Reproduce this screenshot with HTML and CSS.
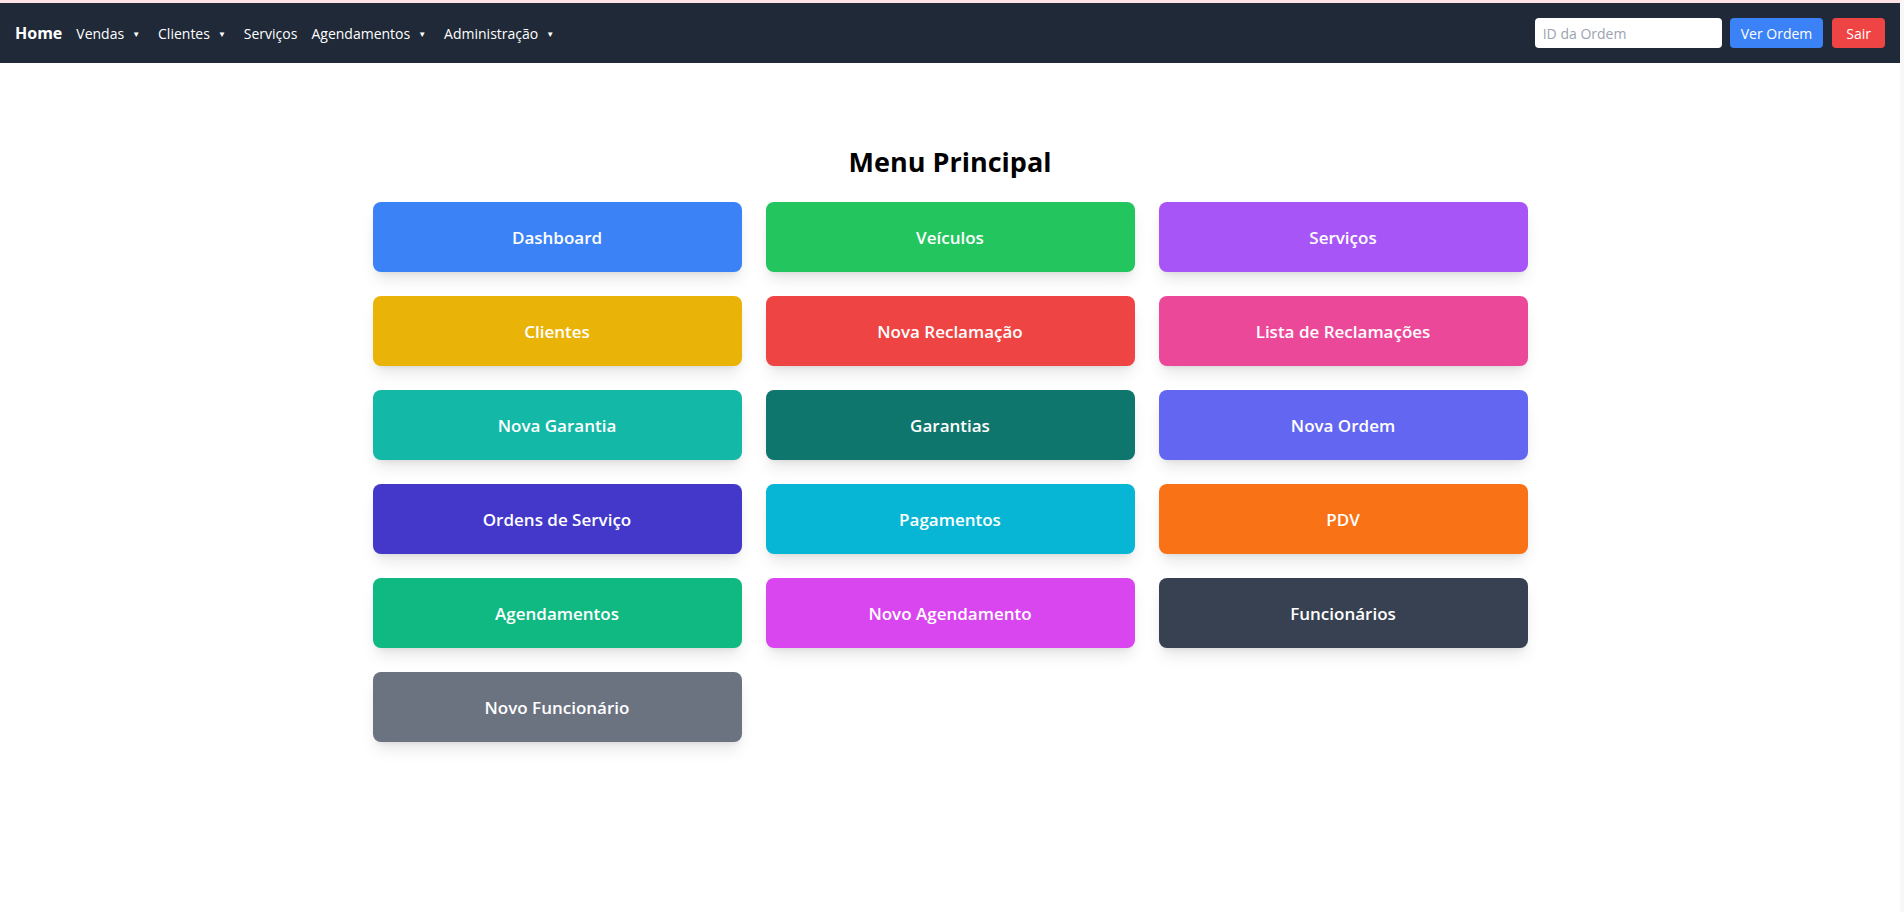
FILE: index.html
```html
<!DOCTYPE html>
<html lang="pt-BR">
<head>
<meta charset="utf-8">
<title>Menu Principal</title>
<link rel="stylesheet" href="styles.css">
</head>
<body>
<div class="page">
  <nav class="navbar">
    <div class="nav-left">
      <a class="brand" href="#">Home</a>
      <a class="nav-link" href="#">Vendas<span class="caret">&#9660;</span></a>
      <a class="nav-link" href="#">Clientes<span class="caret">&#9660;</span></a>
      <a class="nav-link" href="#">Serviços</a>
      <a class="nav-link" href="#">Agendamentos<span class="caret">&#9660;</span></a>
      <a class="nav-link" href="#">Administração<span class="caret">&#9660;</span></a>
    </div>
    <div class="nav-right">
      <input class="order-input" type="text" placeholder="ID da Ordem">
      <button class="btn btn-blue">Ver Ordem</button>
      <button class="btn btn-red btn-sair">Sair</button>
    </div>
  </nav>
  <main class="main">
    <h1 class="title">Menu Principal</h1>
    <div class="grid">
      <a class="tile c-blue" href="#">Dashboard</a>
      <a class="tile c-green" href="#">Veículos</a>
      <a class="tile c-purple" href="#">Serviços</a>
      <a class="tile c-yellow" href="#">Clientes</a>
      <a class="tile c-red" href="#">Nova Reclamação</a>
      <a class="tile c-pink" href="#">Lista de Reclamações</a>
      <a class="tile c-teal" href="#">Nova Garantia</a>
      <a class="tile c-teal-dark" href="#">Garantias</a>
      <a class="tile c-indigo" href="#">Nova Ordem</a>
      <a class="tile c-indigo-dark" href="#">Ordens de Serviço</a>
      <a class="tile c-cyan" href="#">Pagamentos</a>
      <a class="tile c-orange" href="#">PDV</a>
      <a class="tile c-emerald" href="#">Agendamentos</a>
      <a class="tile c-fuchsia" href="#">Novo Agendamento</a>
      <a class="tile c-gray-dark" href="#">Funcionários</a>
      <a class="tile c-gray" href="#">Novo Funcionário</a>
    </div>
  </main>
</div>
</body>
</html>
```

FILE: styles.css
```css
html {
  background: #f7f7f7;
}
body {
  margin: 0;
  font-family: "Open Sans", "Noto Sans", sans-serif;
  color: #000;
}
.page {
  margin-right: 4px;
  min-height: 912px;
  background: #fff;
  border-top: 3px solid #fbe3e6;
  box-sizing: border-box;
}
.navbar {
  height: 60px;
  background: #1f2937;
  display: flex;
  align-items: center;
  justify-content: space-between;
  padding: 0 15px 0 15px;
}
.nav-left {
  display: flex;
  align-items: center;
  gap: 14px;
}
.brand {
  color: #fff;
  font-weight: 700;
  font-size: 16px;
  text-decoration: none;
}
.nav-link {
  color: #fff;
  font-size: 14px;
  text-decoration: none;
  display: flex;
  align-items: center;
}
.caret {
  font-size: 8px;
  margin-left: 8px;
  margin-right: 4px;
}
.nav-right {
  display: flex;
  align-items: center;
}
.order-input {
  width: 187px;
  height: 30px;
  box-sizing: border-box;
  border: none;
  border-radius: 4px;
  padding: 0 8px;
  font-family: inherit;
  font-size: 14px;
  color: #111;
  outline: none;
}
.order-input::placeholder {
  color: #9ca3af;
}
.btn {
  height: 30px;
  border: none;
  border-radius: 4px;
  color: #fff;
  font-family: inherit;
  font-size: 14px;
  padding: 0 11px;
  margin-left: 8px;
  cursor: pointer;
}
.btn-sair {
  margin-left: 9px;
  padding: 0 14px;
}
.btn-blue { background: #3b82f6; }
.btn-red { background: #ef4444; }

.main {
  padding: 81px 0 40px;
}
.title {
  margin: 0 0 22px;
  text-align: center;
  font-size: 27px;
  line-height: 36px;
  font-weight: 700;
}
.grid {
  width: 1155px;
  margin: 0 auto;
  display: grid;
  grid-template-columns: repeat(3, 1fr);
  gap: 24px;
}
.tile {
  height: 70px;
  border-radius: 8px;
  display: flex;
  align-items: center;
  justify-content: center;
  color: #fff;
  font-weight: 600;
  font-size: 17px;
  text-decoration: none;
  box-shadow: 0 10px 15px -3px rgba(0,0,0,0.1), 0 4px 6px -4px rgba(0,0,0,0.1);
}
.c-blue { background: #3b82f6; }
.c-green { background: #22c55e; }
.c-purple { background: #a855f7; }
.c-yellow { background: #eab308; }
.c-red { background: #ef4444; }
.c-pink { background: #ec4899; }
.c-teal { background: #14b8a6; }
.c-teal-dark { background: #0f766e; }
.c-indigo { background: #6366f1; }
.c-indigo-dark { background: #4338ca; }
.c-cyan { background: #06b6d4; }
.c-orange { background: #f97316; }
.c-emerald { background: #10b981; }
.c-fuchsia { background: #d946ef; }
.c-gray-dark { background: #374151; }
.c-gray { background: #6b7280; }
```
